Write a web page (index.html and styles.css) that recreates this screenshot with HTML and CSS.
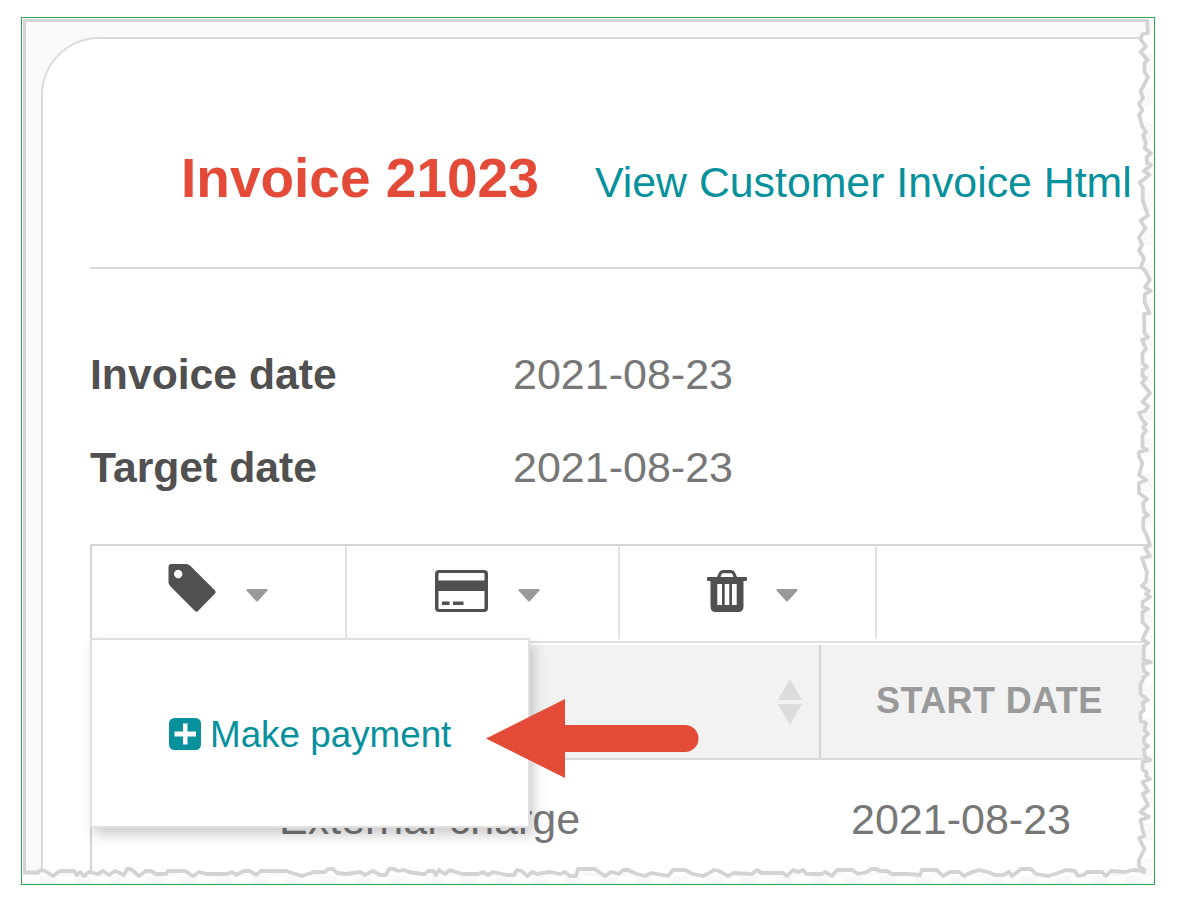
FILE: index.html
```html
<!DOCTYPE html>
<html lang="en">
<head>
<meta charset="utf-8">
<title>Invoice 21023</title>
<link rel="stylesheet" href="styles.css">
</head>
<body>
<main class="frame">
  <div class="page">
    <section class="card">
      <header class="card-header">
        <h1 class="title">Invoice 21023</h1>
        <a class="html-link">View Customer Invoice Html</a>
      </header>
      <dl class="details">
        <dt>Invoice date</dt><dd>2021-08-23</dd>
        <dt>Target date</dt><dd>2021-08-23</dd>
      </dl>
      <div class="panel">
        <nav class="toolbar">
          <div class="tool tool-tag">
            <svg class="icon" width="50" height="50" viewBox="0 0 50 50"><path fill="#505050" fill-rule="evenodd" d="M4.500 1H19Q21.500 1 23.500 3L48 27.500Q49.500 29 48 30.500L31 48Q29.500 49.500 28 48L3.500 23.500Q1.500 21.500 1.500 19V4Q1.500 1 4.500 1ZM11.200 6.800a4.200 4.200 0 1 0 .01 0Z"/></svg>
            <svg class="caret" width="22" height="13" viewBox="0 0 22 13"><path d="M1.500 0H20.500Q22.500 .5 21 2L12 12Q11 13 10 12L1 2Q-.5 .5 1.500 0Z"/></svg>
          </div>
          <div class="tool tool-card">
            <svg class="icon" width="53" height="42" viewBox="0 0 53 42"><path fill="#505050" fill-rule="evenodd" d="M4 0H49Q53 0 53 4V38Q53 42 49 42H4Q0 42 0 38V4Q0 0 4 0ZM4.500 3Q3.500 3 3.500 4V10.500H49.500V4Q49.500 3 48.500 3ZM3.500 21V38Q3.500 39 4.500 39H48.500Q49.500 39 49.500 38V21ZM7 31.500H14.500V35H7ZM18 31.500H28.500V35H18Z"/></svg>
            <svg class="caret" width="22" height="13" viewBox="0 0 22 13"><path d="M1.500 0H20.500Q22.500 .5 21 2L12 12Q11 13 10 12L1 2Q-.5 .5 1.500 0Z"/></svg>
          </div>
          <div class="tool tool-trash">
            <svg class="icon" width="40" height="42" viewBox="0 0 40 42"><path fill="#505050" fill-rule="evenodd" d="M1 7H10L12 2.500Q13 0 16 0H24Q27 0 28 2.500L30 7H39Q40 7 40 8V10Q40 11 39 11H36.500V36Q36.500 42 31.500 42H8.500Q3.500 42 3.500 36V11H1Q0 11 0 10V8Q0 7 1 7ZM13.500 7H26.500L25.300 4Q25 3.300 24 3.300H16Q15 3.300 14.700 4ZM10.300 14V35H15V14ZM17.700 14V35H22.300V14ZM25 14V35H29.700V14Z"/></svg>
            <svg class="caret" width="22" height="13" viewBox="0 0 22 13"><path d="M1.500 0H20.500Q22.500 .5 21 2L12 12Q11 13 10 12L1 2Q-.5 .5 1.500 0Z"/></svg>
          </div>
        </nav>
        <div class="table">
          <div class="row head">
            <div class="cell sort-cell">
              <svg width="26" height="48" viewBox="0 0 26 48"><path fill="#dcdcdc" d="M13 1L25 22H1ZM1 26H25L13 47Z"/></svg>
            </div>
            <div class="cell start-head">START DATE</div>
          </div>
          <div class="row">
            <div class="cell charge">External charge</div>
            <div class="cell start">2021-08-23</div>
          </div>
        </div>
        <div class="menu">
          <a class="menu-item">
            <svg width="32" height="32" viewBox="0 0 32 32"><rect width="32" height="32" rx="5.500" fill="#07919c"/><path fill="#fff" d="M14 5.500H18.500V13.500H27V18.500H18.500V26.500H14V18.500H5.500V13.500H14Z"/></svg>
            <span>Make payment</span>
          </a>
        </div>
      </div>
    </section>
  </div>
  <svg class="arrow" width="213" height="79" viewBox="0 0 213 79"><path fill="#e34b38" d="M0 39.500L79 0V26H199a13.500 13.500 0 0 1 0 27H79V79Z"/></svg>
  <svg class="torn" viewBox="23 18 1131 866">
    <defs>
      <pattern id="checks" x="40" y="876" width="35" height="35" patternUnits="userSpaceOnUse">
        <rect width="35" height="35" fill="#fff"/>
        <rect width="17.500" height="17.500" fill="#f9f9f9"/>
        <rect x="17.500" y="17.500" width="17.500" height="17.500" fill="#f9f9f9"/>
      </pattern>
    </defs>
    <g fill="url(#checks)" stroke="#d3d3d3" stroke-width="3.800" stroke-linejoin="round">
      <path d="M0 872.500L38 872.500 41 870 45 871 53 876 60 871 74 871 77 875 80 872 84 876 89 872 98 874 103 871 109 875 115 871 124 875 127 869 131 869 139 876 146 871 151 871 156 874 166 874 168 871 185 871 193 876 199 872 207 874 227 874 232 872 236 875 244 871 250 871 256 875 261 871 286 871 302 876 314 872 325 872 328 869 333 869 337 873 347 874 360 872 365 875 373 871 380 875 386 875 389 869 394 869 398 871 404 870 409 872 422 874 425 874 428 871 433 871 436 875 439 870 445 874 450 870 462 874 478 874 483 872 488 875 493 872 507 875 514 875 517 870 522 871 527 876 532 872 537 874 550 872 560 874 565 872 570 876 576 876 578 869 595 869 599 872 605 876 611 872 619 874 623 870 628 870 637 874 645 876 651 873 657 874 668 876 673 870 685 870 693 874 703 876 711 872 714 870 719 871 728 876 734 873 752 874 757 870 762 873 783 873 787 876 793 870 798 872 803 870 807 874 822 874 825 872 832 876 837 870 852 870 858 874 867 872 871 869 876 869 880 871 887 871 892 874 907 874 920 875 922 870 937 870 943 876 950 872 959 872 964 876 972 872 979 870 988 872 995 875 1003 875 1009 872 1012 876 1021 869 1031 869 1036 874 1048 876 1055 874 1066 870 1075 871 1078 876 1084 875 1087 872 1102 872 1106 876 1111 871 1125 872 1133 870 1144 871V910H0Z"/>
      <path d="M1147 10V20L1148 33 1142.500 34 1140.500 39 1146 46.500 1140.500 52 1144.500 56.500 1147.500 60 1144.500 63 1144.500 72 1148 77 1144 85 1140.500 91 1143 98 1139 104 1142.500 110 1139 115 1142.500 127 1146 132 1143 135 1146 143 1144.500 148 1151 153.500 1146.500 157 1147 163 1151 165 1144 171 1149.500 175 1139.500 182.500 1143 188 1142.500 200 1148 215.500 1140.500 220.500 1145.500 228 1139 237.500 1142 245 1139 250.500 1144 258 1141 267 1144.500 270 1150 280 1145 287 1151 291 1145 294 1144.500 302 1149.500 313 1144 314 1144.500 333 1148 337 1142 340 1146 349 1142.500 353 1142.500 363 1147 367 1142.500 370 1142.500 376 1146 378 1142 383 1150 393 1142.500 402 1148 406 1145 411 1139 413 1142.500 420 1146 424 1143 427 1146 431 1142.500 435 1142.500 447 1147 450 1139 452 1139 457 1142.500 463 1139 475 1146.500 480 1139 483 1139 493 1147 499 1143 503 1144 512 1148 515 1143.500 518 1143 528 1146.500 535 1150 545 1145 548 1150 556 1142 558 1146 570 1147 572 1146 581.500 1142 586 1149 591 1146 594 1150 597 1142.500 602 1142.500 607 1148 609 1142.500 612 1142.500 622 1148 628 1142.500 639 1148 643 1144 646 1143.500 660 1151 662 1143 664 1144 671 1148 674 1144 677 1140.500 685 1140.500 694 1148 700 1142.500 703 1144 710 1140.500 713 1140.500 721 1146 723 1144.500 730 1148 734 1144 738 1144 743 1148 746 1144 749 1145 757 1150.500 760 1142.500 762 1142.500 769 1147 773 1146 776 1150 779 1142.500 782 1148 791 1142.500 794 1148 805 1140.500 812 1149 817 1140.500 820 1142.500 830 1144.500 836 1139 838 1144.500 849 1139 860 1139 866 1144.500 870L1144 871V910H1180V10Z"/>
      <path stroke="none" d="M1139 874H1154V884H1139Z"/>
    </g>
    <rect x="1143" y="17" width="11" height="2" fill="#fbfbfb"/>
  </svg>
</main>
</body>
</html>
```
FILE: styles.css
```css
* { box-sizing: border-box; }

body {
  margin: 0;
  background: #fff;
  font-family: "Liberation Sans", Arial, sans-serif;
  font-size: 43px;
  color: #777;
  overflow: hidden;
}

.frame {
  position: relative;
  width: 1134px;
  height: 868px;
  margin: 17px 0 0 21px;
  padding: 1px 0 0 1px;
  border: 1px solid #2fa54b;
  overflow: hidden;
}

.page {
  height: 866px;
  padding: 15px 0 0 15px;
  background: #f9f9f9;
  border: solid #d3d3d3;
  border-width: 3px 0 0 3px;
}

.card {
  height: 900px;
  padding-left: 47px;
  background: #fff;
  border: solid #dadada;
  border-width: 2px 0 0 2px;
  border-top-left-radius: 58px;
}

.card-header {
  display: flex;
  align-items: baseline;
  height: 230px;
  padding: 109px 0 0 91px;
  border-bottom: 2px solid #dadada;
  white-space: nowrap;
}

.title {
  width: 414px;
  margin: 0;
  font-size: 55px;
  line-height: 60px;
  color: #e34b38;
}

.html-link {
  font-size: 42.800px;
  color: #07919c;
}

.details {
  display: grid;
  grid-template-columns: 423px 1fr;
  grid-auto-rows: 92.500px;
  margin: 59px 0 31px;
  line-height: 92px;
}

.details dt {
  font-size: 42.700px;
  font-weight: bold;
  color: #505050;
}

.details dd { margin: 0; }

.panel {
  position: relative;
  height: 400px;
  border: solid #d6d6d6;
  border-width: 2px 0 0 2px;
}

.toolbar {
  display: flex;
  height: 97px;
  border-bottom: 2px solid #e0e0e0;
}

.tool {
  display: flex;
  align-items: flex-end;
  height: 93px;
  padding-bottom: 27px;
  border-right: 2px solid #e3e3e3;
}

.tool-tag { width: 255px; padding-left: 75px; gap: 29px; }
.tool-card { width: 273px; padding-left: 88px; gap: 30px; }
.tool-trash { width: 257px; padding-left: 87px; gap: 29px; }
.tool-tag .icon { margin-bottom: -1px; }
.caret { margin-bottom: 10px; fill: #999; }

.table { padding-top: 2px; }

.row {
  display: grid;
  grid-template-columns: 729px 1fr;
  height: 120px;
  line-height: 119px;
  white-space: nowrap;
}

.row.head {
  height: 115px;
  background: #f2f2f2;
  border-bottom: 2px solid #dadada;
  line-height: 111px;
}

.sort-cell {
  display: flex;
  justify-content: flex-end;
  align-items: center;
  padding-right: 16px;
  border-right: 2px solid #d3d3d3;
}

.start-head {
  padding-left: 55px;
  font-size: 36px;
  font-weight: bold;
  letter-spacing: .4px;
  color: #999;
}

.charge { padding-left: 187px; }
.start { padding-left: 30px; }

.menu {
  position: absolute;
  top: 92px;
  left: -2px;
  width: 440px;
  height: 190px;
  padding-left: 78px;
  background: #fff;
  border: 2px solid #e0e0e0;
  box-shadow: 4px 7px 12px rgba(0, 0, 0, .2);
}

.menu-item {
  display: flex;
  align-items: center;
  gap: 9px;
  height: 188px;
  margin-left: -1px;
  font-size: 36.800px;
  color: #07919c;
}

.menu-item span { padding-top: 1px; }

.arrow { position: absolute; left: 464px; top: 681px; }

.torn {
  position: absolute;
  left: 1px;
  top: 0;
  width: 1131px;
  height: 866px;
}
```
